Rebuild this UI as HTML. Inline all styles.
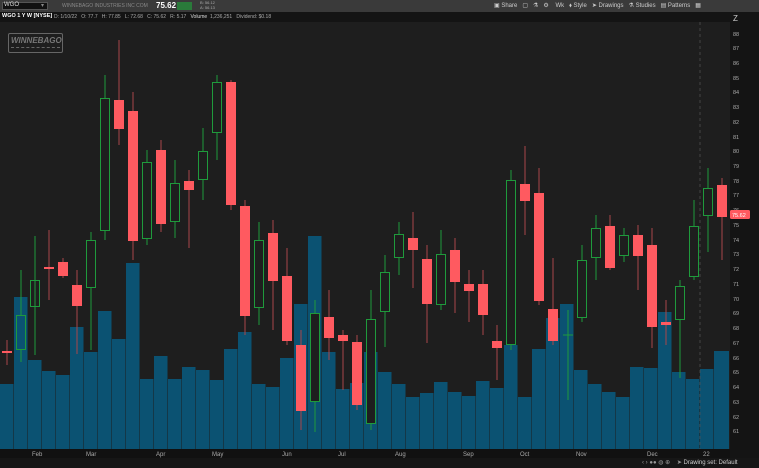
<!DOCTYPE html>
<html><head><meta charset="utf-8"><style>
body{margin:0;width:759px;height:468px;overflow:hidden;background:#1e1e1e;font-family:"Liberation Sans",sans-serif;}
.t{position:absolute;font-size:6px;color:#bbb;white-space:nowrap;}
</style></head><body>
<div style="position:absolute;left:0;top:0;width:759px;height:12px;background:#3a3a3a"></div>
<div style="position:absolute;left:2px;top:2px;width:46px;height:8px;background:#111;border:1px solid #555;box-sizing:border-box"></div>
<div class="t" style="left:4px;top:2px;color:#ddd">WGO</div>
<div class="t" style="left:41px;top:2px;color:#888">▾</div>
<div class="t" style="left:62px;top:3px;color:#888;font-size:5px;width:88px;overflow:hidden">WINNEBAGO INDUSTRIES INC COM</div>
<div class="t" style="left:156px;top:1px;color:#fff;font-size:8px;font-weight:bold">75.62</div>
<div style="position:absolute;left:177px;top:2px;width:15px;height:8px;background:#2a7a3a"></div>
<div class="t" style="left:200px;top:0px;font-size:4px;color:#aaa;line-height:5px">B: 56.12<br>A: 56.13</div>
<div class="t" style="left:494px;top:2px;color:#ccc">▣ Share &nbsp; ▢ &nbsp; ⚗ &nbsp; ⚙ &nbsp;&nbsp; Wk &nbsp; ⬧ Style &nbsp; ➤ Drawings &nbsp; ⚗ Studies &nbsp; ▤ Patterns &nbsp; ▦</div>
<div style="position:absolute;left:0;top:12px;width:730px;height:10px;background:#141414"></div>
<div class="t" style="left:2px;top:13px;color:#fff;font-weight:bold;font-size:5.5px">WGO 1 Y W [NYSE]</div>
<div class="t" style="left:54px;top:13.5px;color:#aaa;font-size:5px">D: 1/10/22 &nbsp; O: 77.7 &nbsp; H: 77.85 &nbsp; L: 72.68 &nbsp; C: 75.62 &nbsp; R: 5.17 &nbsp; <span style="color:#ddd">Volume</span> &nbsp;1,236,251 &nbsp; Dividend: $0.18</div>
<div style="position:absolute;left:730px;top:12px;width:29px;height:446px;background:#141414"></div>
<div style="position:absolute;left:0;top:449px;width:730px;height:9px;background:#111"></div>
<div style="position:absolute;left:0;top:458px;width:759px;height:10px;background:#161616"></div>
<div class="t" style="left:642px;top:459px;color:#999">‹ › ●● ◍ ⊕ &nbsp;&nbsp; ➤ <span style="color:#ccc">Drawing set: Default</span></div>
<div style="position:absolute;left:8px;top:33px;width:55px;height:20px;border:1px solid #666;border-radius:2px;box-sizing:border-box"></div>
<div class="t" style="left:11px;top:36px;color:#777;font-size:8px;font-weight:bold;font-style:italic">WINNEBAGO</div>
<div style="position:absolute;left:11px;top:47px;width:49px;height:2px;border-top:1px dashed #666"></div>
<svg width="759" height="468" style="position:absolute;left:0;top:0">
<g fill="#0b5272">
<rect x="0" y="384" width="13.5" height="65"/><rect x="14" y="297" width="13.5" height="152"/><rect x="28" y="360" width="13.5" height="89"/><rect x="42" y="371" width="13.5" height="78"/><rect x="56" y="375" width="13.5" height="74"/><rect x="70" y="327" width="13.5" height="122"/><rect x="84" y="352" width="13.5" height="97"/><rect x="98" y="311" width="13.5" height="138"/><rect x="112" y="339" width="13.5" height="110"/><rect x="126" y="263" width="13.5" height="186"/><rect x="140" y="379" width="13.5" height="70"/><rect x="154" y="356" width="13.5" height="93"/><rect x="168" y="379" width="13.5" height="70"/><rect x="182" y="367" width="13.5" height="82"/><rect x="196" y="370" width="13.5" height="79"/><rect x="210" y="380" width="13.5" height="69"/><rect x="224" y="349" width="13.5" height="100"/><rect x="238" y="332" width="13.5" height="117"/><rect x="252" y="384" width="13.5" height="65"/><rect x="266" y="387" width="13.5" height="62"/><rect x="280" y="358" width="13.5" height="91"/><rect x="294" y="304" width="13.5" height="145"/><rect x="308" y="236" width="13.5" height="213"/><rect x="322" y="352" width="13.5" height="97"/><rect x="336" y="389" width="13.5" height="60"/><rect x="350" y="383" width="13.5" height="66"/><rect x="364" y="352" width="13.5" height="97"/><rect x="378" y="372" width="13.5" height="77"/><rect x="392" y="384" width="13.5" height="65"/><rect x="406" y="397" width="13.5" height="52"/><rect x="420" y="393" width="13.5" height="56"/><rect x="434" y="382" width="13.5" height="67"/><rect x="448" y="392" width="13.5" height="57"/><rect x="462" y="396" width="13.5" height="53"/><rect x="476" y="381" width="13.5" height="68"/><rect x="490" y="388" width="13.5" height="61"/><rect x="504" y="345" width="13.5" height="104"/><rect x="518" y="397" width="13.5" height="52"/><rect x="532" y="349" width="13.5" height="100"/><rect x="546" y="318" width="13.5" height="131"/><rect x="560" y="304" width="13.5" height="145"/><rect x="574" y="370" width="13.5" height="79"/><rect x="588" y="384" width="13.5" height="65"/><rect x="602" y="392" width="13.5" height="57"/><rect x="616" y="397" width="13.5" height="52"/><rect x="630" y="367" width="13.5" height="82"/><rect x="644" y="368" width="13.5" height="81"/><rect x="658" y="312" width="13.5" height="137"/><rect x="672" y="372" width="13.5" height="77"/><rect x="686" y="379" width="13.5" height="70"/><rect x="700" y="369" width="13.5" height="80"/><rect x="714" y="351" width="15" height="98"/>
</g>
<line x1="700" y1="22" x2="700" y2="449" stroke="#555" stroke-dasharray="3,3" stroke-width="0.7"/>
<g stroke-width="1">
<g stroke="#a8454a">
<line x1="7" y1="340" x2="7" y2="365"/><line x1="49" y1="230" x2="49" y2="300"/><line x1="63" y1="258" x2="63" y2="278"/><line x1="77" y1="270" x2="77" y2="354"/><line x1="119" y1="40" x2="119" y2="145"/><line x1="133" y1="92" x2="133" y2="260"/><line x1="161" y1="140" x2="161" y2="232"/><line x1="189" y1="170" x2="189" y2="248"/><line x1="231" y1="80" x2="231" y2="210"/><line x1="245" y1="200" x2="245" y2="335"/><line x1="273" y1="220" x2="273" y2="330"/><line x1="287" y1="248" x2="287" y2="345"/><line x1="301" y1="330" x2="301" y2="430"/><line x1="329" y1="290" x2="329" y2="360"/><line x1="343" y1="330" x2="343" y2="390"/><line x1="357" y1="335" x2="357" y2="410"/><line x1="413" y1="212" x2="413" y2="288"/><line x1="427" y1="245" x2="427" y2="343"/><line x1="455" y1="238" x2="455" y2="313"/><line x1="469" y1="270" x2="469" y2="322"/><line x1="483" y1="270" x2="483" y2="335"/><line x1="497" y1="325" x2="497" y2="380"/><line x1="525" y1="146" x2="525" y2="235"/><line x1="539" y1="168" x2="539" y2="305"/><line x1="553" y1="258" x2="553" y2="345"/><line x1="610" y1="215" x2="610" y2="270"/><line x1="638" y1="225" x2="638" y2="290"/><line x1="652" y1="228" x2="652" y2="348"/><line x1="666" y1="300" x2="666" y2="345"/><line x1="722" y1="178" x2="722" y2="260"/>
</g>
<g fill="#ff5a60">
<rect x="2" y="351" width="10" height="2"/><rect x="44" y="267" width="10" height="2"/><rect x="58" y="262" width="10" height="14"/><rect x="72" y="285" width="10" height="21"/><rect x="114" y="100" width="10" height="29"/><rect x="128" y="111" width="10" height="130"/><rect x="156" y="150" width="10" height="74"/><rect x="184" y="181" width="10" height="9"/><rect x="226" y="82" width="10" height="123"/><rect x="240" y="206" width="10" height="110"/><rect x="268" y="233" width="10" height="48"/><rect x="282" y="276" width="10" height="65"/><rect x="296" y="345" width="10" height="66"/><rect x="324" y="317" width="10" height="21"/><rect x="338" y="335" width="10" height="6"/><rect x="352" y="342" width="10" height="63"/><rect x="408" y="238" width="10" height="12"/><rect x="422" y="259" width="10" height="45"/><rect x="450" y="250" width="10" height="32"/><rect x="464" y="284" width="10" height="7"/><rect x="478" y="284" width="10" height="31"/><rect x="492" y="341" width="10" height="7"/><rect x="520" y="184" width="10" height="17"/><rect x="534" y="193" width="10" height="108"/><rect x="548" y="309" width="10" height="32"/><rect x="605" y="226" width="10" height="42"/><rect x="633" y="235" width="10" height="21"/><rect x="647" y="245" width="10" height="82"/><rect x="661" y="322" width="10" height="3"/><rect x="717" y="185" width="10" height="32"/>
</g>
<g stroke="#1f9a3c" fill="none">
<line x1="21" y1="270" x2="21" y2="315"/><line x1="21" y1="350" x2="21" y2="362"/><rect x="16.5" y="315.5" width="9" height="34"/>
<line x1="35" y1="236" x2="35" y2="355"/><rect x="30.5" y="280.5" width="9" height="26"/>
<line x1="91" y1="232" x2="91" y2="350"/><rect x="86.5" y="240.5" width="9" height="47" fill="#1e1e1e"/>
<line x1="105" y1="75" x2="105" y2="240"/><rect x="100.5" y="98.5" width="9" height="132" fill="#1e1e1e"/>
<line x1="147" y1="150" x2="147" y2="245"/><rect x="142.5" y="162.5" width="9" height="76" fill="#1e1e1e"/>
<line x1="175" y1="160" x2="175" y2="238"/><rect x="170.5" y="183.5" width="9" height="38" fill="#1e1e1e"/>
<line x1="203" y1="128" x2="203" y2="200"/><rect x="198.5" y="151.5" width="9" height="28" fill="#1e1e1e"/>
<line x1="217" y1="75" x2="217" y2="160"/><rect x="212.5" y="82.5" width="9" height="50" fill="#1e1e1e"/>
<line x1="259" y1="222" x2="259" y2="325"/><rect x="254.5" y="240.5" width="9" height="67" fill="#1e1e1e"/>
<line x1="315" y1="300" x2="315" y2="432"/><rect x="310.5" y="313.5" width="9" height="88" fill="#1e1e1e"/>
<line x1="371" y1="290" x2="371" y2="430"/><rect x="366.5" y="319.5" width="9" height="104" fill="#1e1e1e"/>
<line x1="385" y1="255" x2="385" y2="347"/><rect x="380.5" y="272.5" width="9" height="39" fill="#1e1e1e"/>
<line x1="399" y1="222" x2="399" y2="275"/><rect x="394.5" y="234.5" width="9" height="23" fill="#1e1e1e"/>
<line x1="441" y1="230" x2="441" y2="310"/><rect x="436.5" y="254.5" width="9" height="50" fill="#1e1e1e"/>
<line x1="511" y1="170" x2="511" y2="350"/><rect x="506.5" y="180.5" width="9" height="164" fill="#1e1e1e"/>
<line x1="568" y1="310" x2="568" y2="400"/><line x1="563" y1="335" x2="573" y2="335"/>
<line x1="582" y1="245" x2="582" y2="322"/><rect x="577.5" y="260.5" width="9" height="57" fill="#1e1e1e"/>
<line x1="596" y1="215" x2="596" y2="280"/><rect x="591.5" y="228.5" width="9" height="29" fill="#1e1e1e"/>
<line x1="624" y1="228" x2="624" y2="262"/><rect x="619.5" y="235.5" width="9" height="20" fill="#1e1e1e"/>
<line x1="680" y1="280" x2="680" y2="378"/><rect x="675.5" y="286.5" width="9" height="33" fill="#1e1e1e"/>
<line x1="694" y1="200" x2="694" y2="280"/><rect x="689.5" y="226.5" width="9" height="50" fill="#1e1e1e"/>
<line x1="708" y1="168" x2="708" y2="252"/><rect x="703.5" y="188.5" width="9" height="27" fill="#1e1e1e"/>
</g>
</g>
<g font-family="Liberation Sans" font-size="5.5" fill="#aaa">
<text x="733" y="36">88</text><text x="733" y="50">87</text><text x="733" y="65">86</text><text x="733" y="80">85</text><text x="733" y="94">84</text><text x="733" y="109">83</text><text x="733" y="124">82</text><text x="733" y="139">81</text><text x="733" y="153">80</text><text x="733" y="168">79</text><text x="733" y="183">78</text><text x="733" y="197">77</text><text x="733" y="212">76</text><text x="733" y="227">75</text><text x="733" y="242">74</text><text x="733" y="256">73</text><text x="733" y="271">72</text><text x="733" y="286">71</text><text x="733" y="301">70</text><text x="733" y="315">69</text><text x="733" y="330">68</text><text x="733" y="345">67</text><text x="733" y="360">66</text><text x="733" y="374">65</text><text x="733" y="389">64</text><text x="733" y="404">63</text><text x="733" y="419">62</text><text x="733" y="433">61</text>
</g>
<g font-family="Liberation Sans" font-size="6" fill="#aaa">
<text x="32" y="456">Feb</text><text x="86" y="456">Mar</text><text x="156" y="456">Apr</text><text x="212" y="456">May</text><text x="282" y="456">Jun</text><text x="338" y="456">Jul</text><text x="395" y="456">Aug</text><text x="463" y="456">Sep</text><text x="520" y="456">Oct</text><text x="576" y="456">Nov</text><text x="647" y="456">Dec</text><text x="703" y="456">22</text>
</g>
<rect x="730" y="210" width="20" height="9" rx="1.5" fill="#ff5a60"/>
<text x="732" y="217" font-family="Liberation Sans" font-size="5.5" fill="#fff">75.62</text>
<text x="733" y="21" font-family="Liberation Sans" font-size="8" fill="#ccc">Z</text>
</svg>
</body></html>
